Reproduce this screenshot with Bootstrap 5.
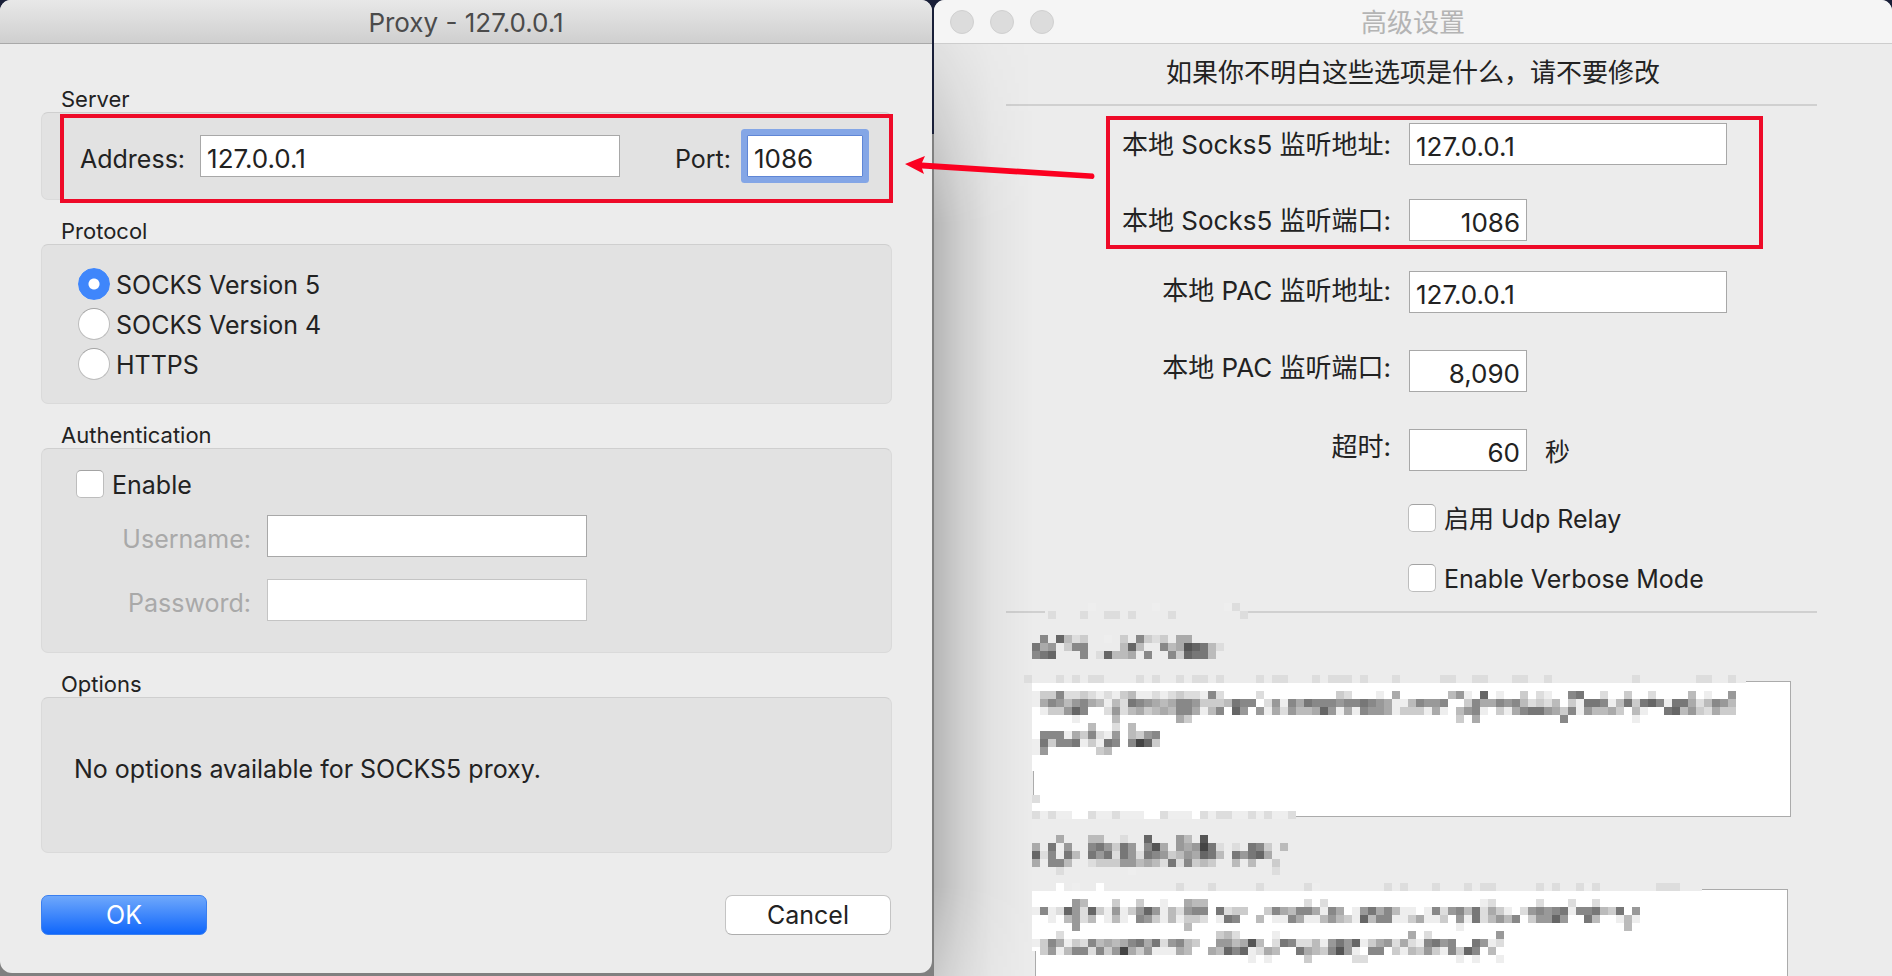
<!DOCTYPE html>
<html lang="zh-CN">
<head>
<meta charset="utf-8">
<meta name="viewport" content="width=device-width, initial-scale=1">
<title>Proxy - 127.0.0.1</title>
<link href="https://cdn.jsdelivr.net/npm/bootstrap@5.3.0/dist/css/bootstrap.min.css" rel="stylesheet">
<style>
  body { font-family: Inter, "Noto Sans CJK SC", sans-serif; font-size: 25px; line-height: 40px; color: #222;
    background: linear-gradient(#191f38 134px, #808080 134px); }
  .desk { gap: 2px; height: 100vh; min-height: 960px; }
  .win { background: #ececec; min-width: 0; }
  .win-proxy { flex: 932 1 0; border-radius: 11px 11px 12px 12px; margin-bottom: 3px; }
  .win-adv { flex: 958 1 0; border-radius: 11px 11px 0 0; }
  .titlebar { height: 44px; border-bottom: 1px solid #a9a9a9; border-radius: 11px 11px 0 0; font-size: 26px; line-height: 46px;
    background: linear-gradient(#e8e8e8, #cfcfcf); color: #4b4b4b; }
  .win-adv .titlebar { background: #f5f5f5; border-color: #cdcdcd; color: #b4b4b4; }
  .lights { left: 16px; top: 10px; gap: 16px; }
  .lights i { width: 24px; height: 24px; border-radius: 50%; background: #dcdcdc; border: 1px solid #d0d0d0; }
  .cast { left: 0; top: 44px; bottom: 0; width: 100px; pointer-events: none;
    background: linear-gradient(90deg, rgba(0,0,0,.23), rgba(0,0,0,.13) 25px, rgba(0,0,0,.04) 58px, rgba(0,0,0,0));
    -webkit-mask-image: linear-gradient(rgba(0,0,0,.2), #000 180px, #000 calc(100% - 90px), rgba(0,0,0,.6)); }

  .proxy-body { padding: 40px 40px 0 41px; }
  .group-title { float: none; font-size: 22px; height: 28px; line-height: 30px; margin: 0; padding-left: 20px; }
  .group-gap { margin-top: 16px; }
  .panel { background: #e2e2e2; border: 1px solid #dadada; border-top-color: #cfcfcf; border-radius: 7px; }
  .field { height: 42px; padding: 4px 6px 0; border: 1px solid #a8a8a8; border-radius: 0; background: #fff; color: #222;
    font-size: 26px; line-height: 36px; }
  .field:disabled { background: #fff; }
  .field-faint { border-color: #c4c4c4; }
  .cap { line-height: 42px; padding-top: 3px; height: 42px; }
  .server { padding: 22px 28px 22px 38px; }
  .cap-addr { width: 121px; }
  .cap-port { width: 128px; padding-right: 16px; }
  .port { width: 116px; border-color: #5f86d6; box-shadow: 0 0 0 6px #84a6e6; border-radius: 1px; }
  .marker { border: 4px solid #ee0a28; pointer-events: none; z-index: 2; }
  .marker-server { left: 18px; right: -2px; top: 1px; bottom: -4px; }
  .proto { padding: 19px 36px 19px; }
  .choice { min-height: 40px; padding: 0; margin: 0; gap: 8px; }
  .choice .form-check-input { float: none; margin: 0; flex: none; border: 1px solid #bdbdbd; border-top-color: #a3a3a3; background-color: #fff; }
  .choice input[type=radio] { width: 32px; height: 32px; }
  .choice input[type=radio]:checked { border-color: #3f86fb; background: #fff radial-gradient(circle, #fff 5px, #3f86fb 6px); }
  .choice input[type=checkbox] { width: 28px; height: 28px; border-radius: 5px; }
  .choice label { padding-top: 2px; line-height: 38px; }
  .proto .choice { gap: 6px; }
  .auth { padding: 15px 34px 31px; }
  .auth-field { margin-top: 11px; gap: 16px; }
  .auth-field + .auth-field { margin-top: 22px; }
  .auth-field .cap { width: 175px; color: #a9a9a9; }
  .auth-field .field { width: 320px; }
  .opts { padding: 51px 32px 63px; }
  .act { width: 166px; height: 40px; padding: 0; border-radius: 7px; font-size: 25px; line-height: 38px; }
  .act-ok { color: #fff; border: 1px solid #3a7ff0; background: linear-gradient(#6fa8fb, #0f66fb); }
  .act-cancel { color: #222; background: #fff; border: 1px solid #c4c4c4; border-bottom-color: #adadad; }
  .acts { margin-top: 42px; padding-right: 1px; }

  .cjk { font-size: 26px; }
  .lead-line { height: 60px; line-height: 58px; }
  .rule { height: 2px; margin: 0 75px 0 72px; background: #d0d0d0; }
  .row-f { height: 42px; gap: 18px; }
  .row-f > .cap { width: calc(50% - 22px); flex: none; padding: 0; line-height: 36px; }
  .row-f > .cap-low { line-height: 44px; }
  .row-f > .cap-mid { line-height: 40px; }
  .row-f .field { width: 318px; }
  .row-f .num { width: 118px; text-align: right; }
  .row-f .unit { line-height: 46px; }
  .rows { padding-top: 17px; }
  .gap-a { margin-top: 34px; } .gap-b { margin-top: 30px; } .gap-c { margin-top: 37px; }
  .ticks { margin: 27px 0 13px; padding-left: calc(50% - 5px); gap: 20px; }
  .marker-adv { left: calc(50% - 307px); width: 657px; top: -7px; bottom: -8px; }
  .arrow { left: -34px; top: 150px; z-index: 3; overflow: visible; }
  .feeds { padding: 68px 101px 0 99px; }
  .feed { border: 1px solid #ababab; border-radius: 0; resize: none; padding: 4px 6px; }
  .feed-one { height: 136px; }
  .feed-two { margin: 72px 3px 0 2px; width: auto; border-bottom: 0; }
  .mosaic { left: 76px; top: -10px; pointer-events: none; }
</style>
</head>
<body>
<div class="desk d-flex overflow-hidden">

  <main class="win win-proxy">
    <div class="titlebar text-center">Proxy - 127.0.0.1</div>
    <form class="proxy-body" onsubmit="return false">
      <fieldset>
        <legend class="group-title">Server</legend>
        <div class="panel server d-flex position-relative">
          <label class="cap cap-addr" for="addr">Address:</label>
          <input class="field flex-grow-1" id="addr" type="text" value="127.0.0.1" style="min-width:0">
          <label class="cap cap-port text-end" for="port">Port:</label>
          <input class="field port" id="port" type="text" value="1086">
          <div class="marker marker-server position-absolute"></div>
        </div>
      </fieldset>

      <fieldset class="group-gap">
        <legend class="group-title">Protocol</legend>
        <div class="panel proto">
          <div class="choice form-check d-flex align-items-center"><input class="form-check-input" type="radio" name="proto" id="s5" checked><label for="s5">SOCKS Version 5</label></div>
          <div class="choice form-check d-flex align-items-center"><input class="form-check-input" type="radio" name="proto" id="s4"><label for="s4">SOCKS Version 4</label></div>
          <div class="choice form-check d-flex align-items-center"><input class="form-check-input" type="radio" name="proto" id="hs"><label for="hs">HTTPS</label></div>
        </div>
      </fieldset>

      <fieldset class="group-gap">
        <legend class="group-title">Authentication</legend>
        <div class="panel auth">
          <div class="choice form-check d-flex align-items-center"><input class="form-check-input" type="checkbox" id="en"><label for="en">Enable</label></div>
          <div class="auth-field d-flex"><label class="cap text-end" for="user">Username:</label><input class="field" id="user" type="text" disabled></div>
          <div class="auth-field d-flex"><label class="cap text-end" for="pass">Password:</label><input class="field field-faint" id="pass" type="password" disabled></div>
        </div>
      </fieldset>

      <fieldset class="group-gap">
        <legend class="group-title">Options</legend>
        <div class="panel opts">No options available for SOCKS5 proxy.</div>
      </fieldset>

      <div class="acts d-flex justify-content-between">
        <button class="btn act act-ok" type="submit">OK</button>
        <button class="btn act act-cancel" type="button">Cancel</button>
      </div>
    </form>
  </main>

  <section class="win win-adv d-flex flex-column position-relative">
    <div class="cast position-absolute"></div>
    <div class="titlebar text-center flex-shrink-0">高级设置</div>
    <div class="lights position-absolute d-flex"><i></i><i></i><i></i></div>
    <svg class="arrow position-absolute" width="200" height="40" viewBox="0 0 200 40" aria-hidden="true">
      <path d="M22 12.500L193 23.500Q196 26 193 29L22 18.500L24 24L5 14L25 6Z" fill="#fb0020"/>
    </svg>
    <div class="lead-line cjk text-center flex-shrink-0">如果你不明白这些选项是什么，请不要修改</div>
    <div class="rule flex-shrink-0"></div>

    <div class="rows flex-shrink-0">
      <div class="position-relative">
        <div class="row-f d-flex"><label class="cap cap-low cjk text-end" for="sa">本地 Socks5 监听地址:</label><input class="field" id="sa" type="text" value="127.0.0.1"></div>
        <div class="row-f d-flex gap-a"><label class="cap cap-low cjk text-end" for="sp">本地 Socks5 监听端口:</label><input class="field num" id="sp" type="text" value="1086"></div>
        <div class="marker marker-adv position-absolute"></div>
      </div>
      <div class="row-f d-flex gap-b"><label class="cap cap-mid cjk text-end" for="pa">本地 PAC 监听地址:</label><input class="field" id="pa" type="text" value="127.0.0.1"></div>
      <div class="row-f d-flex gap-c"><label class="cap cjk text-end" for="pp">本地 PAC 监听端口:</label><input class="field num" id="pp" type="text" value="8,090"></div>
      <div class="row-f d-flex gap-c"><label class="cap cjk text-end" for="to">超时:</label><input class="field num" id="to" type="text" value="60"><span class="unit">秒</span></div>
      <div class="ticks d-flex flex-column">
        <div class="choice form-check d-flex align-items-center"><input class="form-check-input" type="checkbox" id="udp"><label for="udp">启用 Udp Relay</label></div>
        <div class="choice form-check d-flex align-items-center"><input class="form-check-input" type="checkbox" id="vb"><label for="vb">Enable Verbose Mode</label></div>
      </div>
    </div>
    <div class="rule flex-shrink-0"></div>

    <div class="feeds position-relative d-flex flex-column flex-grow-1">
      <textarea class="feed feed-one form-control" aria-label="地址一"></textarea>
      <textarea class="feed feed-two form-control flex-grow-1" aria-label="地址二"></textarea>
      <svg class="mosaic position-absolute" id="mosaic" width="740" height="364" viewBox="0 0 740 364" aria-hidden="true"></svg>
    </div>
  </section>
</div>

<script src="https://cdn.jsdelivr.net/npm/bootstrap@5.3.0/dist/js/bootstrap.bundle.min.js"></script>
<script>
// Redaction mosaic: 8px cells, one hex digit of grey each ("." is clear).
// Row index -> pieces of [first column, digits].
const rows = {
  0: [[7,'e'],[15,'e'],[24,'ed']],
  1: [[2,'d'],[6,'d'],[9,'dd'],[12,'d'],[17,'d'],[26,'d']],
  4: [[0,'.8.6bdc..e.c.8cdc.aa']],
  5: [[0,'7a9.c88....b6b..8ba567bd']],
  6: [[0,'876...8.d6bba.8..8c677b']],
  9: [[-1,'d'],[3,'d'],[5,'d'],[7,'dd'],[13,'d'],[15,'d'],[18,'d'],[20,'dd'],[23,'d'],[28,'d'],[30,'dd'],[35,'d'],[37,'ddd'],[41,'d'],[45,'d'],[51,'dd'],[55,'dd'],[60,'dd'],[64,'d'],[75,'d'],[83,'dd'],[87,'d']],
  11: [[0,'ecc8ddcdedecbeededcdde8d'],[28,'d'],[38,'cd'],[43,'e.a'],[52,'b9e.6.e'],[61,'c.de'],[67,'87'],[71,'d'],[74,'c..d'],[82,'b.e'],[87,'9']],
  12: [[0,'ea89b98abebd789aba889cccb788fd9e8a788898878'],[43,'9aeeb8998ffc8aa898bdcdbfce778eb7c768e77adb89b']],
  13: [[0,'fecc968'],[7,'ffd9dbacbab88aeb8f69f9ead9bba69eae899aeccceaefb98efcea8779ac8e9bbacfbeff76b9cdacc']],
  14: [[5,'e'],[10,'b'],[18,'ac'],[53,'c.a'],[66,'8'],[75,'e']],
  15: [[7,'b..d.b']],
  16: [[1,'888eac8de9fbc98']],
  17: [[0,'e7c887ece78f846c']],
  18: [[0,'e9......cb']],
  24: [[0,'d']],
  26: [[0,'dedeeffdeedeeeffdeeefdeddeededeed']],
  29: [[3,'a...bb..d..6...9b.5']],
  30: [[0,'a.7e9..879c79.85a.9a947d.d.78c.b']],
  31: [[0,'6d8.7b.797d79d789cb9a67b.7976a']],
  32: [[0,'a.88b..dccc99babd7d8cbc..b.b..c']],
  33: [[3,'d'],[12,'e'],[30,'d']],
  35: [[3,'f.e..f'],[18,'d...d'],[28,'d'],[34,'de'],[44,'d.d'],[50,'d'],[54,'d.dd'],[63,'d.d'],[68,'ded'],[78,'ddd']],
  37: [[5,'9b...c..c..e..abb'],[34,'d.d'],[56,'ed'],[63,'d...d..d']],
  38: [[0,'e8ed69d6ce9ec969ebd988f7dccffc8ab88ae8afe97a8beefe8d98b7dacefd98987e887bc7f9']],
  39: [[2,'efb9dbfebef89cebeccdfe78ffbfee8aeeb9bce6b88eecaeecf9e7db9b8fc9969ff7bffebe']],
  40: [[5,'9'],[19,'b'],[53,'e'],[74,'b']],
  41: [[3,'d'],[23,'cbd'],[30,'e'],[47,'a.d'],[58,'9']],
  42: [[0,'ec8aecd8baba87a7d98bcff99ba5bfd78ddbe9796eca9dade8798ff79ed']],
  43: [[1,'c9eb88d8c94ac9eeeabffab686edabff7abc859ef88fcebc9ce8c68fb']],
  44: [[27,'e.e'],[34,'c'],[40,'dd'],[53,'e.e'],[58,'e']]
};
const svg = document.getElementById('mosaic');
const cell = (x, y, w, h, fill) => {
  const r = document.createElementNS('http://www.w3.org/2000/svg', 'rect');
  for (const [k, v] of Object.entries({ x, y, width: w, height: h, fill, 'shape-rendering': 'crispEdges' })) r.setAttribute(k, v);
  svg.append(r);
};
cell(35, 6, 195, 6, '#ececec');      // covered stretch of the rule
cell(16, 72, 720, 8, '#ececec');     // covered top edge of the first box
cell(22, 80, 8, 88, '#fff');
cell(22, 192, 8, 16, '#fff');
cell(22, 280, 670, 8, '#ececec');    // covered top edge of the second box
cell(22, 288, 8, 60, '#fff');
for (const [r, parts] of Object.entries(rows))
  for (const [c, s] of parts)
    [...s].forEach((ch, i) => { if (ch !== '.') cell(22 + (c + i) * 8, r * 8, 8, 8, '#' + ch + ch + ch); });
</script>
</body>
</html>
